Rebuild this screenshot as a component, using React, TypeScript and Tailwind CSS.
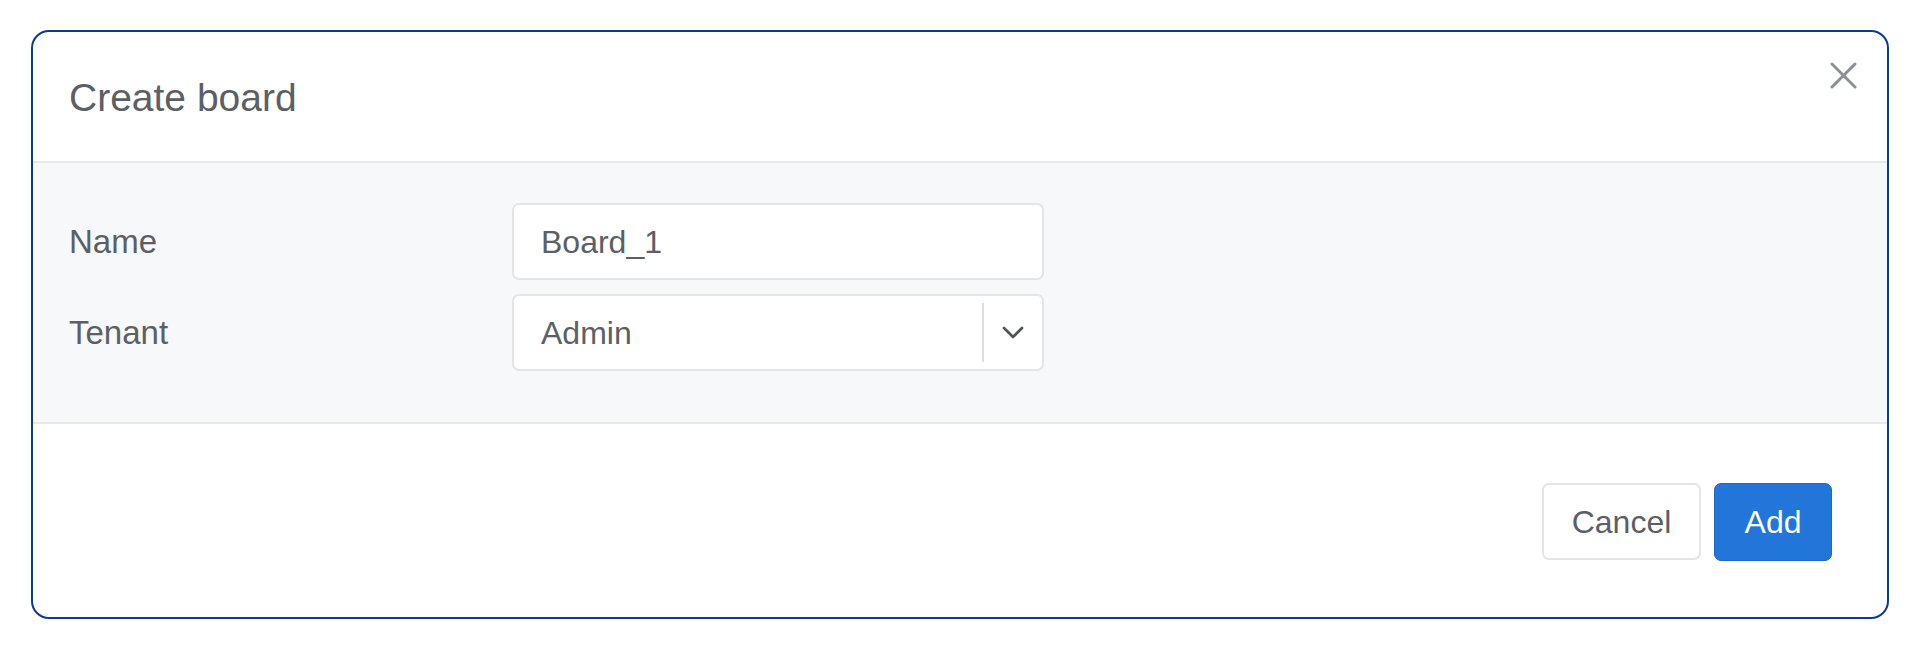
import React from "react";

export default function App() {
  const font = { fontFamily: '"Liberation Sans", Arial, Helvetica, sans-serif' };
  return (
    <div className="w-[1919px] h-[649px] bg-white pt-[30px] pl-[31px]" style={font}>
      <div className="w-[1858px] h-[589px] border-2 border-[#0a3a93] rounded-[18px] overflow-hidden flex flex-col bg-white">
        {/* Header */}
        <div className="relative h-[131px] shrink-0 border-b-2 border-[#e6e8e9] flex items-center pl-[36px]">
          <h2 className="text-[39px] leading-none text-[#5a6064] pt-[2px]">Create board</h2>
          <button className="absolute top-[30px] right-[30px] w-[27px] h-[27px] flex items-center justify-center">
            <svg width="27" height="27" viewBox="0 0 27 27">
              <path d="M2 2 L25 25 M25 2 L2 25" stroke="#8b9093" strokeWidth="3" strokeLinecap="round" />
            </svg>
          </button>
        </div>
        {/* Body */}
        <div className="h-[261px] shrink-0 bg-[#f7f8fa] border-b-2 border-[#e6e8e9] pt-[40px] pl-[36px]">
          <div className="grid grid-cols-[443px_532px] gap-y-[14px]">
            <div className="h-[77px] flex items-center text-[33px] text-[#5a6064]">Name</div>
            <div className="h-[77px] bg-white border-2 border-[#e3e5e7] rounded-[7px] flex items-center pl-[27px] text-[32px] text-[#5a6064]">
              Board_1
            </div>
            <div className="h-[77px] flex items-center text-[33px] text-[#5a6064]">Tenant</div>
            <div className="h-[77px] bg-white border-2 border-[#e3e5e7] rounded-[7px] flex items-center text-[32px] text-[#5a6064]">
              <div className="flex-1 pl-[27px]">Admin</div>
              <div className="w-[2px] h-[59px] bg-[#dcdfe1]" />
              <div className="w-[58px] h-full flex items-center justify-center">
                <svg width="22" height="13" viewBox="0 0 22 13">
                  <path d="M2 2 L11 11 L20 2" fill="none" stroke="#4f5458" strokeWidth="2.7" strokeLinecap="round" strokeLinejoin="round" />
                </svg>
              </div>
            </div>
          </div>
        </div>
        {/* Footer */}
        <div className="flex-1 flex items-center justify-end pr-[55px] gap-[13px] pt-[2px]">
          <button className="h-[77px] w-[159px] bg-white border-2 border-[#e3e5e7] rounded-[7px] text-[32px] text-[#5a6064]">
            Cancel
          </button>
          <button className="h-[78px] w-[118px] bg-[#2276da] border border-[#1e69c6] rounded-[7px] text-[32px] text-white">
            Add
          </button>
        </div>
      </div>
    </div>
  );
}
